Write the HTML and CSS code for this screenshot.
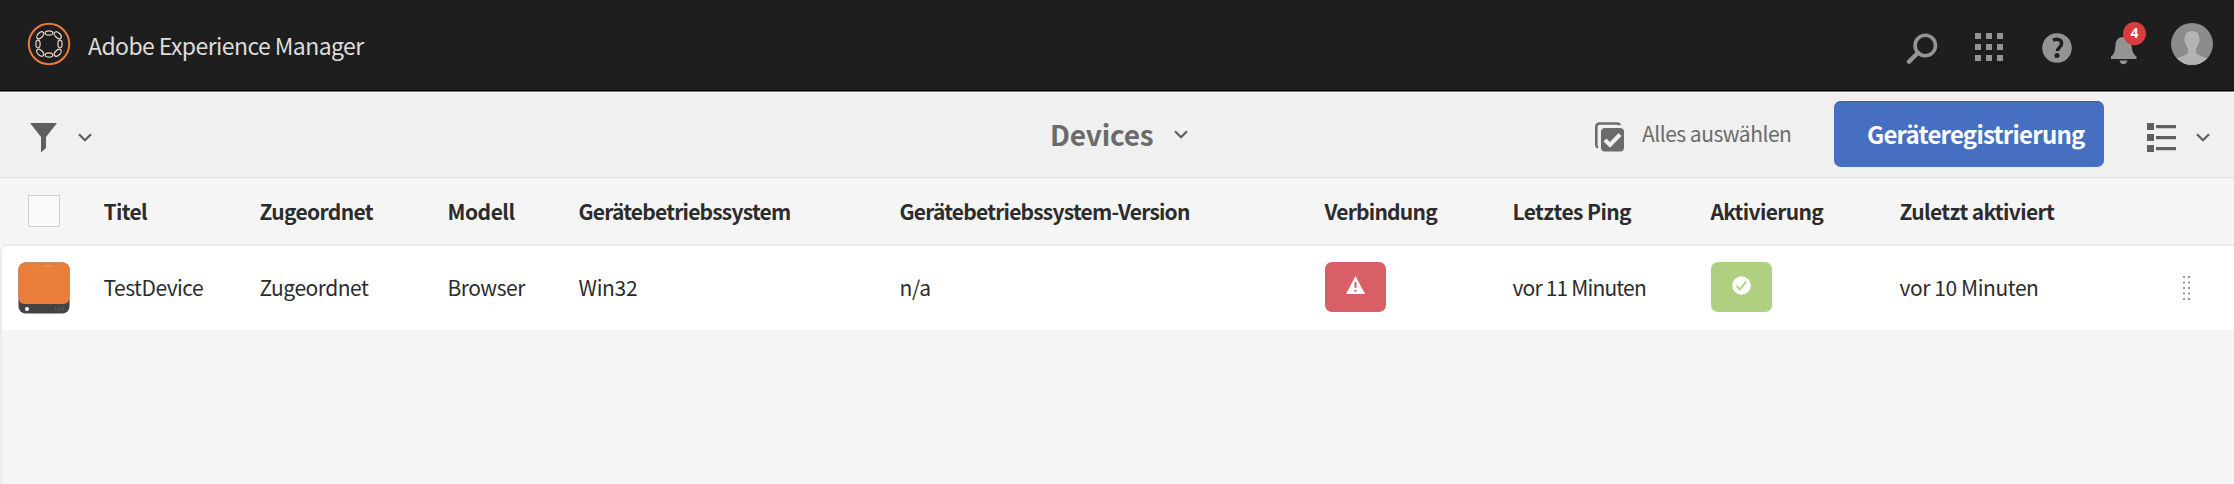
FILE: index.html
```html
<!DOCTYPE html>
<html lang="de">
<head>
<meta charset="utf-8">
<title>Adobe Experience Manager</title>
<link rel="stylesheet" href="styles.css">
</head>
<body>
<header class="shell">
  <svg class="logo" width="44" height="44" viewBox="0 0 44 44" fill="none">
    <circle cx="22" cy="22" r="20.2" stroke="#ec7a3c" stroke-width="2"/>
    <g stroke="#e8d5c8" stroke-width="1.2">
      <ellipse cx="22" cy="11" rx="3.8" ry="2.1"/>
      <ellipse cx="22" cy="9.6" rx="4.2" ry="2.5" transform="rotate(45 22 22)"/>
      <ellipse cx="22" cy="11" rx="3.8" ry="2.1" transform="rotate(90 22 22)"/>
      <ellipse cx="22" cy="9.6" rx="4.2" ry="2.5" transform="rotate(135 22 22)"/>
      <ellipse cx="22" cy="11" rx="3.8" ry="2.1" transform="rotate(180 22 22)"/>
      <ellipse cx="22" cy="9.6" rx="4.2" ry="2.5" transform="rotate(225 22 22)"/>
      <ellipse cx="22" cy="11" rx="3.8" ry="2.1" transform="rotate(270 22 22)"/>
      <ellipse cx="22" cy="9.6" rx="4.2" ry="2.5" transform="rotate(315 22 22)"/>
    </g>
  </svg>
  <span class="brand">Adobe Experience Manager</span>
  <div class="tools">
    <svg width="32" height="32" viewBox="0 0 32 32" fill="none" stroke="#949494"><circle cx="19.3" cy="12.5" r="10.2" stroke-width="3.6"/><path d="M12 19.8 3 28.8" stroke-width="4.4" stroke-linecap="round"/></svg>
    <svg class="apps" width="28" height="28" viewBox="0 0 28 28" fill="#949494"><path d="M0 0h6v6H0zM11 0h6v6h-6zM22 0h6v6h-6zM0 11h6v6H0zM11 11h6v6h-6zM22 11h6v6h-6zM0 22h6v6H0zM11 22h6v6h-6zM22 22h6v6h-6z"/></svg>
    <svg class="help" width="30" height="30" viewBox="0 0 30 30"><circle cx="15" cy="15" r="14.8" fill="#949494"/><path d="M11 7.3c4-2 8.6-.8 8.6 3.2 0 3.8-4.2 4-4.2 7.6" fill="none" stroke="#1e1e1e" stroke-width="3.4"/><circle cx="15" cy="22.6" r="2.5" fill="#1e1e1e"/></svg>
    <div class="bell">
      <svg width="28" height="28" viewBox="0 0 28 28" fill="#949494"><path d="M13 0c4.600 0 8 3 8.500 8 .5 6 1.500 9 5 11.500V22H1v-2.500c3.500-2.500 4-5.500 4.500-11.500C5.700 3 8.500 0 13 0zM9.500 23.500h8c-.7 2.500-2 3.800-4 3.800s-3.300-1.300-4-3.800z"/></svg>
      <span class="count">4</span>
    </div>
    <svg class="avatar" width="42" height="42" viewBox="0 0 42 42"><defs><clipPath id="face"><circle cx="21" cy="21" r="21"/></clipPath></defs><g clip-path="url(#face)"><path fill="#8c8c8c" d="M0 0h42v42H0z"/><path fill="#b3b3b3" d="M21 8c5 0 7.300 3 7.200 7.500 1 .6.600 4-.8 4.500-.6 3-1.400 4.500-2.400 5.600v3.200c0 3.800 7 4.400 12.500 7.200V42h-33v-6C10 33.200 17 32.600 17 28.800v-3.200c-1-1.100-1.800-2.600-2.400-5.600-1.400-.5-1.800-3.900-.8-4.500C13.700 11 16 8 21 8z"/></g></svg>
  </div>
</header>

<nav class="bar">
  <svg class="filter" width="27" height="30" viewBox="0 0 27 30" fill="#5f5f5f"><path d="M0 0h27L16 14v11l-5 4.500V14z"/></svg>
  <svg class="chev c-filter" width="14" height="9" viewBox="0 0 14 9"><path d="M1 1.200 7 7.200l6-6"/></svg>
  <span class="title">Devices</span>
  <svg class="chev c-title" width="14" height="9" viewBox="0 0 14 9"><path d="M1 1.200 7 7.200l6-6"/></svg>
  <svg class="selall" width="29" height="30" viewBox="0 0 29 30"><path d="M3 25.500C1.500 25 1.300 24 1.300 23V5c0-2.200 1.200-3.500 3.500-3.500H22c1.400 0 2.500.4 3 1.500" fill="none" stroke="#6b6b6b" stroke-width="2.600"/><rect x="6" y="6" width="23" height="23.500" rx="4" fill="#6b6b6b"/><path d="m10 18 5 5L25 12.500" fill="none" stroke="#f0f0f0" stroke-width="4"/></svg>
  <span class="all">Alles auswählen</span>
  <button class="cta">Geräteregistrierung</button>
  <svg class="list" width="29" height="29" viewBox="0 0 29 29" fill="#5f5f5f"><path d="M0 0h7v7H0zM0 11h7v7H0zM0 22h7v7H0zM9 2h20v3.200H9zM9 13h20v3.200H9zM9 24h20v3.200H9z"/></svg>
  <svg class="chev c-list" width="14" height="9" viewBox="0 0 14 9"><path d="M1 1.200 7 7.200l6-6"/></svg>
</nav>

<main>
  <div class="grid head">
    <span class="check"></span>
    <span class="snug">Titel</span>
    <span class="snug">Zugeordnet</span>
    <span class="wide">Modell</span>
    <span class="tight">Gerätebetriebssystem</span>
    <span class="tight">Gerätebetriebssystem-Version</span>
    <span class="tight">Verbindung</span>
    <span class="wide ping">Letztes Ping</span>
    <span class="snug">Aktivierung</span>
    <span class="snug">Zuletzt aktiviert</span>
  </div>
  <div class="list-body">
    <div class="grid row">
      <svg class="device" width="52" height="52" viewBox="0 0 52 52"><rect x=".5" y=".5" width="51" height="51" rx="7" fill="#434343"/><path d="M7.500.5h37a7 7 0 0 1 7 7V36a6 6 0 0 1-6 6h-39a6 6 0 0 1-6-6V7.500a7 7 0 0 1 7-7z" fill="#eb7d3a"/><path d="M18 4.200h3M25 4.200h10" stroke="#f09253" stroke-width="1.300"/><circle cx="9" cy="47" r="2" fill="#fff"/><path d="M37.500 45v4M41.500 45v4M45 45v4" stroke="#5a5a5a" stroke-width="1.300"/></svg>
      <span class="text">TestDevice</span>
      <span class="text">Zugeordnet</span>
      <span class="text">Browser</span>
      <span class="text loose">Win32</span>
      <span class="text loose">n/a</span>
      <span class="badge bad"><svg width="19" height="18" viewBox="0 0 19 18"><path d="M9.500 0 19 18H0z" fill="#fff"/><path d="M9.500 6v6M9.500 13.700v2" stroke="#d85f66" stroke-width="2"/></svg></span>
      <span class="text tight">vor 11 Minuten</span>
      <span class="badge good"><svg width="19" height="19" viewBox="0 0 19 19"><circle cx="9.500" cy="9.500" r="9.300" fill="#fff"/><path d="m4.500 9.800 3.300 3.600 6.400-7.800" fill="none" stroke="#afd080" stroke-width="1.800"/></svg></span>
      <span class="text minutes">vor 10 Minuten</span>
      <svg class="grip" width="8" height="24" viewBox="0 0 8 24" fill="#9a9a9a"><path d="M0 0h2v2H0zM5 0h2v2H5zM0 5.500h2v2H0zM5 5.500h2v2H5zM0 11h2v2H0zM5 11h2v2H5zM0 16.500h2v2H0zM5 16.500h2v2H5zM0 22h2v2H0zM5 22h2v2H5z"/></svg>
    </div>
  </div>
</main>
</body>
</html>
```
FILE: styles.css
```css
* { box-sizing: border-box; }
body {
  display: flex;
  flex-direction: column;
  height: 100vh;
  margin: 0;
  overflow: hidden;
  background: #f5f5f5;
  color: #2c2c2c;
  font: 21px/30px "Noto Sans CJK SC", "Noto Sans", sans-serif;
}
svg { display: block; flex: none; }

/* Global header */
.shell {
  display: flex;
  flex: none;
  align-items: flex-start;
  height: 92px;
  padding: 0 21px 0 27px;
  background: #1e1e1e;
  border-bottom: 1px solid #777;
  box-shadow: inset 0 -1px #000;
}
.logo { margin-top: 22px; }
.brand {
  margin: 30px 0 0 17px;
  font-size: 23px;
  letter-spacing: -.58px;
  color: #dcdcdc;
  white-space: nowrap;
}
.tools { display: flex; align-items: flex-start; margin-left: auto; }
.tools > svg:first-child { margin-top: 33px; }
.tools .apps { margin: 33px 0 0 37px; }
.tools .help { margin: 33px 0 0 39px; }
.bell { position: relative; margin: 37px 0 0 38px; }
.count {
  position: absolute;
  left: 13px;
  top: -15px;
  width: 23px;
  height: 23px;
  border-radius: 50%;
  background: #d73c3f;
  color: #fff;
  font: bold 14px/22px "Noto Sans", sans-serif;
  text-align: center;
}
.tools .avatar { margin: 23px 0 0 33px; }

/* Action bar */
.bar {
  display: flex;
  flex: none;
  align-items: flex-start;
  height: 86px;
  border-top: 1px solid #fff;
  border-bottom: 1px solid #dfdfdf;
  background: #f0f0f0;
  white-space: nowrap;
}
.chev { fill: none; stroke: #5f5f5f; stroke-width: 2.3; }
.filter { margin: 30px 0 0 30px; }
.c-filter { margin: 40px 0 0 21px; }
.title {
  width: 102px;
  margin: 26px 0 0 958px;
  font-size: 28px;
  font-weight: bold;
  letter-spacing: -.2px;
  color: #6b6b6b;
}
.c-title { margin: 37px 0 0 22px; }
.selall { margin: 29px 0 0 407px; }
.all { width: 148px; margin: 25px 0 0 18px; letter-spacing: -.5px; color: #6b6b6b; }
.cta {
  width: 270px;
  height: 66px;
  margin: 8px 0 0 44px;
  padding: 0 0 0 33px;
  border: 0;
  border-radius: 7px;
  background: #466fc1;
  box-shadow: inset 0 1px #3562b8;
  color: #fff;
  font: bold 24px/30px "Noto Sans CJK SC", "Noto Sans", sans-serif;
  letter-spacing: -.77px;
  text-align: left;
}
.list { margin: 30px 0 0 43px; }
.c-list { margin: 40px 0 0 20px; }

/* Device list */
main { display: flex; flex: 1; flex-direction: column; }
.grid {
  display: grid;
  grid-template-columns: 103.5px 156px 188px 131px 321px 425px 188px 198px 189px 283.5px 1fr;
  align-items: center;
  white-space: nowrap;
}
.head { height: 66px; font-weight: bold; }
.snug { letter-spacing: -.66px; }
.wide { letter-spacing: -.48px; }
.ping { letter-spacing: -.58px; }
.tight { letter-spacing: -.78px; }
.check {
  width: 32px;
  height: 32px;
  margin-left: 28px;
  border: 1px solid #cfcfcf;
  background: #fafafa;
}
.list-body {
  flex: 1;
  border-left: 2px solid #ececec;
  border-top: 2px solid #eaeaea;
  border-radius: 7px 0 0 0;
}
.row { height: 84px; border-radius: 5px 0 0 0; background: #fff; }
.row > * { margin-left: -2px; }
.text { padding-bottom: 2px; letter-spacing: -.5px; }
.text.loose { letter-spacing: -.3px; }
.text.tight { letter-spacing: -.82px; }
.text.minutes { letter-spacing: -.42px; }
.row .device { margin-left: 16px; }
.badge {
  display: flex;
  justify-content: center;
  width: 61px;
  height: 50px;
  margin-bottom: 2px;
  padding-top: 14px;
  border-radius: 7px;
}
.bad { background: #d85f66; }
.good { background: #afd080; }
```
